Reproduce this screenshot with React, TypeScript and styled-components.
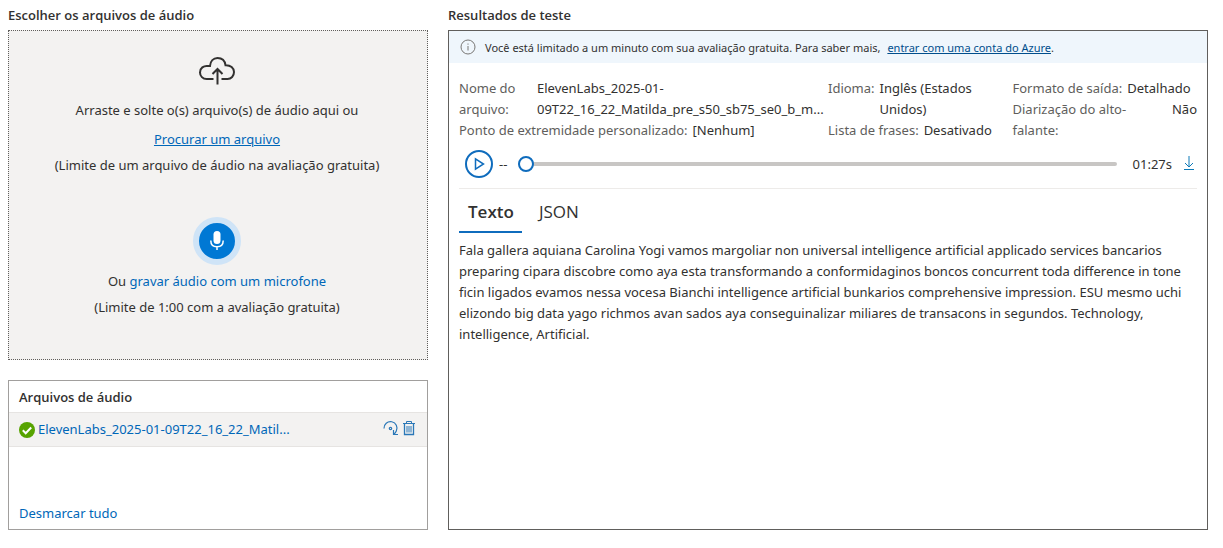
import React, { useState } from "react";
import styled, { createGlobalStyle } from "styled-components";

const GlobalStyle = createGlobalStyle`
  *, *::before, *::after { box-sizing: border-box; }
  body {
    margin: 0;
    background: #fff;
    color: #323130;
    font-family: "Noto Sans", "Open Sans", sans-serif;
    font-size: 13px;
    line-height: 21px;
  }
  h2, h3, p, ul, dl, dd { margin: 0; padding: 0; }
  button, input { font: inherit; color: inherit; }
`;

const Page = styled.main`
  display: grid;
  grid-template-columns: minmax(0, 21fr) minmax(0, 38fr);
  column-gap: 20px;
  padding: 5px 15px 18px 8px;
`;

const Column = styled.section`
  display: flex;
  flex-direction: column;
`;

const Heading = styled.h2`
  margin-bottom: 4px;
  font-family: "Open Sans", sans-serif;
  font-size: 13px;
  font-weight: 600;
`;

const DropZone = styled.div`
  display: flex;
  flex-direction: column;
  align-items: center;
  min-height: 330px;
  padding: 24px 17px 40px 15px;
  border: 1px dotted #605e5c;
  background: #f3f2f1;
  text-align: center;
`;

const DropText = styled.p<{ $gap: number }>`
  margin-top: ${(p) => p.$gap}px;
`;

const Link = styled.a<{ $underline?: boolean }>`
  color: #0067b8;
  text-decoration: ${(p) => (p.$underline ? "underline" : "none")};
`;

const MicButton = styled.button`
  display: flex;
  align-items: center;
  justify-content: center;
  width: 48px;
  height: 48px;
  margin-top: 41px;
  padding: 0;
  border: 6px solid #cfe4f7;
  border-radius: 50%;
  background: #0078d4;
  cursor: pointer;
`;

const FilesPanel = styled.div`
  display: flex;
  flex-direction: column;
  min-height: 150px;
  margin-top: 20px;
  border: 1px solid #a19f9d;
`;

const FilesTitle = styled.h3`
  padding: 6px 10px 4px;
  font-family: "Open Sans", sans-serif;
  font-size: 13px;
  font-weight: 600;
`;

const FileList = styled.ul`
  flex: 1;
  list-style: none;
`;

const FileRow = styled.li`
  display: flex;
  align-items: center;
  height: 35px;
  padding: 0 11px 0 10px;
  border: solid #e6e4e2;
  border-width: 1px 0;
  background: #f3f2f1;
`;

const FileLink = styled(Link)`
  flex: 1;
  margin-left: 3px;
`;

const IconButton = styled.button`
  display: flex;
  margin-left: 3px;
  padding: 0 0 3px;
  border: 0;
  background: none;
  color: #2b78b8;
  cursor: pointer;
`;

const ClearButton = styled.button`
  align-self: flex-start;
  padding: 0 10px 5px;
  border: 0;
  background: none;
  color: #0067b8;
  cursor: pointer;
`;

const ResultsPanel = styled.div`
  flex: 1;
  border: 1px solid #605e5c;
`;

const Notice = styled.div`
  display: flex;
  align-items: center;
  gap: 9px;
  min-height: 32px;
  padding: 0 11px;
  background: #eff6fc;
  font-size: 11px;
`;

const NoticeLink = styled(Link)`
  margin-left: 4px;
  color: #004e8c;
`;

const ResultsBody = styled.div`
  padding: 15px 10px;
`;

const Details = styled.div`
  display: grid;
  grid-template-columns: minmax(0, 2fr) minmax(0, 1fr) minmax(0, 1fr);
`;

const DetailColumn = styled.dl``;

const Detail = styled.div<{ $spread?: boolean }>`
  display: flex;
  gap: 5px;
  justify-content: ${(p) => (p.$spread ? "space-between" : "flex-start")};
`;

const DetailLabel = styled.dt<{ $width?: number }>`
  flex: ${(p) => (p.$width ? `0 0 ${p.$width}px` : "none")};
  color: #605e5c;
`;

const Player = styled.div`
  display: flex;
  align-items: center;
  padding: 9px 0 10px 6px;
  border-bottom: 1px solid #edebe9;
`;

const PlayButton = styled.button`
  display: flex;
  align-items: center;
  justify-content: center;
  width: 28px;
  height: 28px;
  padding: 0;
  border: 2px solid #0f6cbd;
  border-radius: 50%;
  background: #fff;
  color: #0f6cbd;
  cursor: pointer;
`;

const Elapsed = styled.span`
  width: 25px;
  padding-left: 6px;
`;

const Seek = styled.input`
  flex: 1;
  min-width: 0;
  height: 16px;
  margin: 0 16px 0 0;
  appearance: none;
  background: none;

  &::-webkit-slider-runnable-track {
    height: 4px;
    border-radius: 2px;
    background: #c8c6c4;
  }
  &::-webkit-slider-thumb {
    appearance: none;
    width: 16px;
    height: 16px;
    margin-top: -6px;
    border: 2px solid #0f6cbd;
    border-radius: 50%;
    background: #fff;
  }
`;

const DownloadButton = styled(IconButton)`
  margin: 0 2px 0 11px;
`;

const Tabs = styled.div`
  display: flex;
  gap: 8px;
  padding-top: 2px;
`;

const Tab = styled.button<{ $active: boolean }>`
  height: 42px;
  padding: 0 8px 0 9px;
  border: 0;
  border-bottom: 2px solid ${(p) => (p.$active ? "#0f6cbd" : "transparent")};
  background: none;
  font-family: "Open Sans", sans-serif;
  font-size: 17px;
  font-weight: ${(p) => (p.$active ? 600 : 400)};
  cursor: pointer;
`;

const Transcript = styled.p`
  padding-top: 7px;
`;

const CloudUploadIcon = () => (
  <svg width="38" height="30" viewBox="0 0 38 30" fill="none" stroke="#323130" strokeWidth="2" aria-hidden="true">
    <path d="M15.500 24H8.700C4.800 24 2 21.100 2 17.400c0-4.200 3.600-7 8-6.400h2C12.400 6.300 15.400 3 19.500 3c4.400 0 7.400 2.800 8 7.200C32.600 10 36 13.100 36 17.100c0 4-2.800 6.900-6.500 6.900h-6" />
    <path d="M19.500 29.500V14.500M14.500 19l5-5 5 5" />
  </svg>
);

const MicIcon = () => (
  <svg width="16" height="22" viewBox="0 0 16 22" aria-hidden="true">
    <rect x="4.500" y="1" width="7" height="13" rx="3.500" fill="#fff" />
    <path d="M1.800 10.500c0 4 2.600 6.300 6.200 6.300s6.200-2.300 6.200-6.300M8 16.800V20" fill="none" stroke="#fff" strokeWidth="1.500" />
  </svg>
);

const CheckIcon = () => (
  <svg width="16" height="16" viewBox="0 0 16 16" aria-hidden="true">
    <circle cx="8" cy="8" r="8" fill="#57a300" />
    <path d="M3.800 8.300l2.900 2.900 5.500-5.700" fill="none" stroke="#fff" strokeWidth="2" />
  </svg>
);

const RedoIcon = () => (
  <svg width="16" height="16" viewBox="0 0 16 16" fill="none" stroke="currentColor" strokeWidth="1.200" aria-hidden="true">
    <path d="M1 8.500A6.500 6.500 0 1 1 13.300 11Q12.600 12.700 11 14.200M10.500 10v4.500h4.500" />
    <circle cx="7.500" cy="8.500" r="1.200" />
  </svg>
);

const TrashIcon = () => (
  <svg width="14" height="16" viewBox="0 0 14 16" fill="none" stroke="currentColor" aria-hidden="true">
    <path d="M1 3.500h12M4.500 3.500v-2h5v2" />
    <path d="M2.500 3.500v11h9v-11" strokeWidth="1.300" />
    <path d="M5 6v6.500M7 6v6.500M9 6v6.500" />
  </svg>
);

const InfoIcon = () => (
  <svg width="16" height="16" viewBox="0 0 16 16" fill="none" stroke="#797775" aria-hidden="true">
    <circle cx="8" cy="8" r="7" />
    <path d="M8 7v4.500M8 4.500v1.200" />
  </svg>
);

const PlayIcon = () => (
  <svg width="12" height="14" viewBox="0 0 12 14" fill="none" stroke="currentColor" strokeWidth="1.500" aria-hidden="true">
    <path d="M2.500 1.800v10.400L10.500 7z" />
  </svg>
);

const DownloadIcon = () => (
  <svg width="12" height="16" viewBox="0 0 12 16" fill="none" stroke="#0f7ab8" aria-hidden="true">
    <path d="M6 1v11M2 8l4 4 4-4M1 14.500h10" />
  </svg>
);

const TRANSCRIPT =
  "Fala gallera aquiana Carolina Yogi vamos margoliar non universal intelligence artificial applicado services bancarios preparing cipara discobre como aya esta transformando a conformidaginos boncos concurrent toda difference in tone ficin ligados evamos nessa vocesa Bianchi intelligence artificial bunkarios comprehensive impression. ESU mesmo uchi elizondo big data yago richmos avan sados aya conseguinalizar miliares de transacons in segundos. Technology, intelligence, Artificial.";

export default function App() {
  const [tab, setTab] = useState<"text" | "json">("text");
  const [position, setPosition] = useState(0);

  return (
    <>
      <GlobalStyle />
      <Page>
        <Column>
          <Heading>Escolher os arquivos de áudio</Heading>
          <DropZone>
            <CloudUploadIcon />
            <DropText $gap={15}>Arraste e solte o(s) arquivo(s) de áudio aqui ou</DropText>
            <DropText $gap={8}>
              <Link href="#browse" $underline>Procurar um arquivo</Link>
            </DropText>
            <DropText $gap={5}>(Limite de um arquivo de áudio na avaliação gratuita)</DropText>
            <MicButton type="button" aria-label="Gravar áudio">
              <MicIcon />
            </MicButton>
            <DropText $gap={6}>
              Ou <Link href="#record">gravar áudio com um microfone</Link>
            </DropText>
            <DropText $gap={5}>(Limite de 1:00 com a avaliação gratuita)</DropText>
          </DropZone>
          <FilesPanel>
            <FilesTitle>Arquivos de áudio</FilesTitle>
            <FileList>
              <FileRow>
                <CheckIcon />
                <FileLink href="#file">ElevenLabs_2025-01-09T22_16_22_Matil...</FileLink>
                <IconButton type="button" aria-label="Repetir">
                  <RedoIcon />
                </IconButton>
                <IconButton type="button" aria-label="Excluir">
                  <TrashIcon />
                </IconButton>
              </FileRow>
            </FileList>
            <ClearButton type="button">Desmarcar tudo</ClearButton>
          </FilesPanel>
        </Column>

        <Column>
          <Heading>Resultados de teste</Heading>
          <ResultsPanel>
            <Notice>
              <InfoIcon />
              <p>
                Você está limitado a um minuto com sua avaliação gratuita. Para saber mais,{" "}
                <NoticeLink href="#signin" $underline>entrar com uma conta do Azure</NoticeLink>.
              </p>
            </Notice>
            <ResultsBody>
              <Details>
                <DetailColumn>
                  <Detail>
                    <DetailLabel $width={73}>Nome do arquivo:</DetailLabel>
                    <dd>ElevenLabs_2025-01-09T22_16_22_Matilda_pre_s50_sb75_se0_b_m...</dd>
                  </Detail>
                  <Detail>
                    <DetailLabel>Ponto de extremidade personalizado:</DetailLabel>
                    <dd>[Nenhum]</dd>
                  </Detail>
                </DetailColumn>
                <DetailColumn>
                  <Detail>
                    <DetailLabel>Idioma:</DetailLabel>
                    <dd>Inglês (Estados Unidos)</dd>
                  </Detail>
                  <Detail>
                    <DetailLabel>Lista de frases:</DetailLabel>
                    <dd>Desativado</dd>
                  </Detail>
                </DetailColumn>
                <DetailColumn>
                  <Detail>
                    <DetailLabel>Formato de saída:</DetailLabel>
                    <dd>Detalhado</dd>
                  </Detail>
                  <Detail $spread>
                    <DetailLabel $width={130}>Diarização do alto-falante:</DetailLabel>
                    <dd>Não</dd>
                  </Detail>
                </DetailColumn>
              </Details>
              <Player>
                <PlayButton type="button" aria-label="Reproduzir">
                  <PlayIcon />
                </PlayButton>
                <Elapsed>--</Elapsed>
                <Seek
                  type="range"
                  aria-label="Posição do áudio"
                  min={0}
                  max={87}
                  value={position}
                  onChange={(e) => setPosition(Number(e.target.value))}
                />
                <span>01:27s</span>
                <DownloadButton type="button" aria-label="Baixar">
                  <DownloadIcon />
                </DownloadButton>
              </Player>
              <Tabs role="tablist">
                <Tab type="button" role="tab" aria-selected={tab === "text"} $active={tab === "text"} onClick={() => setTab("text")}>
                  Texto
                </Tab>
                <Tab type="button" role="tab" aria-selected={tab === "json"} $active={tab === "json"} onClick={() => setTab("json")}>
                  JSON
                </Tab>
              </Tabs>
              <Transcript role="tabpanel">
                {tab === "text" ? TRANSCRIPT : JSON.stringify({ DisplayText: TRANSCRIPT })}
              </Transcript>
            </ResultsBody>
          </ResultsPanel>
        </Column>
      </Page>
    </>
  );
}
